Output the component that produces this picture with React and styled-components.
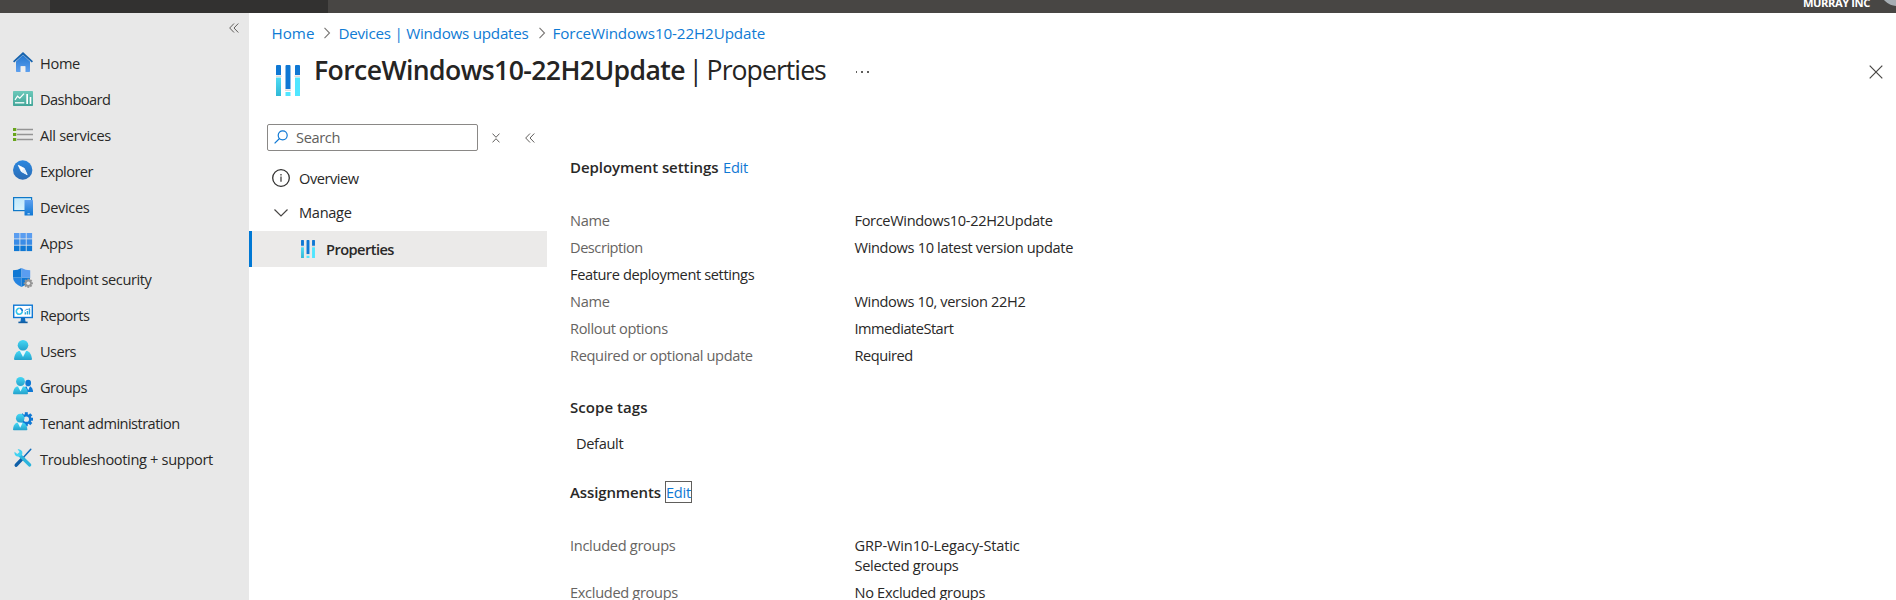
import React from "react";
import styled, { createGlobalStyle } from "styled-components";

const GlobalStyle = createGlobalStyle`
  * { box-sizing: border-box; }
  body {
    margin: 0;
    background: #fff;
    overflow: hidden;
    color: #292827;
    font-family: "Open Sans", "Noto Sans", sans-serif;
    font-size: 14.6px;
  }
  svg { display: block; flex: none; }
`;

const Page = styled.div`
  display: flex;
  flex-direction: column;
  height: 600px;
  overflow: hidden;
`;

const TopBar = styled.header`
  display: flex;
  flex: none;
  align-items: flex-end;
  height: 13px;
  padding-left: 50px;
  background: #484644;
  overflow: hidden;
`;

const TopSearch = styled.div`
  width: 278px;
  height: 13px;
  background: #323130;
`;

const TenantName = styled.div`
  margin: 0 10px 3px auto;
  color: #fff;
  font-size: 11.2px;
  font-weight: 700;
  line-height: 14px;
  letter-spacing: -0.42px;
  white-space: nowrap;
`;

const Avatar = styled.div`
  flex: none;
  width: 34px;
  height: 34px;
  margin: 0 -18px 7px 0;
  border-radius: 50%;
  background: #a7aeb4;
`;

const Columns = styled.div`
  display: flex;
  flex: 1;
  min-height: 0;
`;

const Sidebar = styled.nav`
  flex: none;
  width: 249px;
  background: #e8e8e8;
`;

const SidebarHeader = styled.div`
  display: flex;
  justify-content: flex-end;
  height: 33px;
  padding: 10px 10px 0 0;
`;

const SideItem = styled.a`
  display: flex;
  align-items: center;
  gap: 7px;
  height: 36px;
  padding: 0 0 2px 13px;
  svg { margin-bottom: 2px; }
`;

const Text = styled.span`
  letter-spacing: ${(p) => p.$track || 0}px;
  white-space: nowrap;
`;

const Content = styled.main`
  flex: 1;
  min-width: 0;
`;

const Breadcrumb = styled.div`
  display: flex;
  align-items: center;
  height: 30px;
  padding: 10px 0 0 22.5px;
  color: #0f7bd4;
  font-size: 15.2px;
  svg { margin: 0 7px 0 9px; }
`;

const TitleRow = styled.div`
  display: flex;
  align-items: flex-start;
  height: 53px;
  padding: 7px 13px 0 27px;
`;

const TitleIcon = styled.div`
  margin-top: 15px;
`;

const CloseButton = styled.div`
  margin: 15px 0 0 auto;
`;

const Title = styled.h1`
  display: flex;
  gap: 3.5px;
  margin: 0 0 0 14px;
  font-size: 26.6px;
  font-weight: 400;
  line-height: 40px;
  color: #252423;
`;

const TitleName = styled(Text)`
  font-weight: 600;
`;

const TitleSection = styled(Text)`
  word-spacing: -1.5px;
`;

const More = styled.div`
  display: flex;
  gap: 4px;
  margin: 21px 0 0 30px;
`;

const Dot = styled.i`
  width: 1.6px;
  height: 1.6px;
  background: #605e5c;
`;

const Body = styled.div`
  display: flex;
`;

const Menu = styled.aside`
  flex: none;
  width: 298px;
  padding-top: 28px;
`;

const MenuTools = styled.div`
  display: flex;
  align-items: center;
  height: 27px;
  margin-bottom: 9px;
  padding-left: 18px;
`;

const SearchBox = styled.div`
  display: flex;
  align-items: center;
  gap: 8px;
  width: 211px;
  height: 27px;
  margin-right: 14px;
  padding: 0 0 1px 6px;
  border: 1px solid #8a8886;
  border-radius: 2px;
  color: #605e5c;
`;

const CollapseMenu = styled.div`
  margin: 1px 0 0 25px;
`;

const MenuItem = styled.div`
  display: flex;
  align-items: center;
  gap: 9px;
  height: 36px;
  padding: 0 0 1px 23px;
`;

const MenuGroup = styled(MenuItem)`
  height: 35px;
  padding-bottom: 3px;
  svg { margin-top: 2px; }
`;

const SelectedItem = styled(MenuItem)`
  gap: 11px;
  padding: 0 0 0 49px;
  border-left: 3px solid #0078d4;
  background: #ebeae9;
  font-weight: 600;
`;

const Details = styled.section`
  flex: 1;
  padding: 61px 0 0 23px;
  line-height: 20px;
`;

const Heading = styled.h2`
  display: flex;
  align-items: center;
  gap: ${(p) => p.$gap || 5}px;
  height: 20px;
  margin: ${(p) => p.$top || 0}px 0 0;
  font-size: 15px;
  font-weight: 600;
`;

const EditLink = styled.a`
  color: #0f78d4;
  font-size: 14.6px;
  font-weight: 400;
  line-height: 20px;
  letter-spacing: -0.2px;
  ${(p) => p.$focused && "outline: 1px solid #605e5c;"}
`;

const Fields = styled.div`
  display: grid;
  grid-template-columns: 284.5px 1fr;
  margin-top: 29.5px;
`;

const Label = styled.div`
  padding: 3.5px 0;
  color: #666462;
`;

const Value = styled.div`
  display: flex;
  flex-direction: column;
  padding: 3.5px 0;
`;

const Subheading = styled.div`
  grid-column: 1 / -1;
  padding: 3.5px 0;
`;

const ScopeTag = styled.div`
  margin: 16px 0 0 6px;
`;

function Svg({ w = 20, h = 20, box, children }) {
  return (
    <svg width={w} height={h} viewBox={box || `0 0 ${w} ${h}`} fill="none">
      {children}
    </svg>
  );
}

const GradientDefs = styled.svg`
  position: absolute;
`;

function Gradients() {
  const defs = [
    ["gBlue", "#2277d0", "#5ea0ef"],
    ["gBlueDown", "#5ea0ef", "#0f78d4"],
    ["gCyan", "#45d8f5", "#24a1cb"],
    ["gTeal", "#6cc9ba", "#42a598"],
    ["gExplorer", "#2b88e0", "#2b6cb5"],
    ["gScreen", "#bfe7fb", "#d8f2fd"],
    ["gBar", "#50dcf5", "#2fb8d6"],
  ];
  return (
    <GradientDefs width="0" height="0">
      <defs>
        {defs.map(([id, a, b]) => (
          <linearGradient key={id} id={id} x1="0" x2="0" y1="0" y2="1">
            <stop offset="0" stopColor={a} />
            <stop offset="1" stopColor={b} />
          </linearGradient>
        ))}
      </defs>
    </GradientDefs>
  );
}

const DoubleChevron = () => (
  <Svg w={10} h={10}>
    <path d="M5 .5.7 5 5 9.500M9.300.5 5 5l4.300 4.500" stroke="#605e5c" strokeWidth="1" />
  </Svg>
);

const Crumb = () => (
  <Svg w={8} h={12}>
    <path d="M1.500.8 6.500 6l-5 5.200" stroke="#797775" strokeWidth="1.100" />
  </Svg>
);

const HomeIcon = () => (
  <Svg>
    <path d="M3 9.500 10 3l7 6.500V19.200q0 .8-.8.8H12.300v-5.700H7.700V20H3.800q-.8 0-.8-.8z" fill="url(#gBlue)" />
    <path d="M7.700 20v-5.700h4.600V20z" fill="#efefef" />
    <path d="M10 0 20 9.300l-1.200 1.300L10 2.800l-8.800 7.800L0 9.300z" fill="#1562ad" />
  </Svg>
);

const DashboardIcon = () => (
  <Svg h={15}>
    <rect width="20" height="15" rx=".7" fill="url(#gTeal)" />
    <path d="M2 8.800 4.500 5.200l2.300 2 4.200-4.500" stroke="#fff" strokeWidth="1.200" />
    <path d="M2 11.800h9.300" stroke="#fff" strokeWidth="1.300" />
    <path d="M13.300 3h1.700v10h-1.700zM16.700 6h1.600v7h-1.600z" fill="#fff" />
  </Svg>
);

const ServicesIcon = () => (
  <Svg h={15}>
    <path d="M4 2.500h16M4 7.500h16M4 12.500h16" stroke="#949494" strokeWidth="1.400" />
    <path d="M0 1h3.300v3H0zM0 6h3.300v3H0zM0 11h3.300v3H0z" fill="#68a51c" />
  </Svg>
);

const ExplorerIcon = () => (
  <Svg>
    <circle cx="9.700" cy="10" r="9.700" fill="url(#gExplorer)" />
    <path d="M5.300 5.300 11.200 8.300 14.200 14.700 8.300 11.500z" fill="#fff" stroke="#fff" strokeWidth=".8" strokeLinejoin="round" />
    <path d="M8.300 11.500 14.200 14.700 11.200 8.300z" fill="#e3effb" />
  </Svg>
);

const DevicesIcon = () => (
  <Svg>
    <rect x=".6" y="1.600" width="18" height="13" fill="url(#gScreen)" stroke="#0f78c8" strokeWidth="1.200" />
    <rect x="11.500" y="4" width="8.500" height="15.500" rx=".6" fill="url(#gBlueDown)" />
    <path d="M14.500 17.800h2.300" stroke="#cfe5fb" />
  </Svg>
);

const AppsIcon = () => (
  <Svg>
    {["#5a9df0", "#3a8ce6", "#0f78d4"].map((color, row) =>
      [0, 1, 2].map((col) => (
        <rect key={`${row}${col}`} x={1 + col * 6.3} y={1 + row * 6.3} width="5.500" height="5.500" fill={color} />
      ))
    )}
  </Svg>
);

const Cog = ({ x, y, r, hole, color }) => (
  <g transform={`translate(${x} ${y})`}>
    {[0, 45, 90, 135].map((a) => (
      <path key={a} d={`M0 ${-r}V${r}`} stroke={color} strokeWidth={r * 0.42} transform={`rotate(${a})`} />
    ))}
    <circle r={r * 0.74} fill={color} />
    <circle r={r * 0.38} fill={hole} />
  </g>
);

const SecurityIcon = () => (
  <Svg>
    <path d="M8.500 0Q4.800 2.200 0 2.200V9.500h8.500z" fill="#0f78d4" />
    <path d="M0 9.400h8.500V19Q0 14.700 0 9.400z" fill="#2584e0" />
    <path d="M8.500 9.400h8.700Q17 14.700 8.500 19z" fill="#0f78d4" />
    <path d="M8.500 0q4 2.200 8.700 2.200V9.500H8.500z" fill="#5a9df0" />
    <Cog x={15.3} y={15.3} r={4.6} hole="#e8e8e8" color="#949494" />
  </Svg>
);

const ReportsIcon = () => (
  <Svg>
    <rect x=".7" y="1.200" width="18.600" height="12.300" fill="#fff" stroke="#0f78d4" strokeWidth="1.400" />
    <path d="M8 14h4l.6 4H7.400z" fill="#0f6cbd" />
    <path d="M5.400 17.600h9.200v1.600H5.400z" fill="#115ea3" />
    <path d="M6.500 4.300a3 3 0 1 0 2.800 3" stroke="#32c5e9" strokeWidth="1.600" />
    <path d="M6.700 4.300a3 3 0 0 1 2.600 3" stroke="#0f78d4" strokeWidth="1.600" />
    <path d="M12.300 10.500V8.300M14.400 10.500V7M16.500 10.500V4.800" stroke="#2aa7d8" strokeWidth="1.400" />
    <path d="m11.500 7 2.500-2 1 .7 2-2" stroke="#0f78d4" strokeWidth=".7" />
  </Svg>
);

const Person = ({ fill, collar = "#e8f8fd" }) => (
  <g>
    <path d="M1 19q.6-6 4.500-8h9q3.900 2 4.500 8 0 1-1 1H2q-1 0-1-1z" fill={fill} />
    <path d="M6.800 10.700 10 17l3.200-6.300z" fill={collar} />
    <circle cx="10" cy="5.300" r="5.300" fill={fill} />
  </g>
);

const UsersIcon = () => (
  <Svg>
    <Person fill="url(#gCyan)" />
  </Svg>
);

const GroupsIcon = () => (
  <Svg>
    <g transform="translate(9.800 3.800) scale(.54 .61)">
      <Person fill="#0f78d4" />
    </g>
    <g transform="translate(-.8 1) scale(.83 .86)">
      <Person fill="url(#gCyan)" />
    </g>
  </Svg>
);

const TenantIcon = () => (
  <Svg>
    <Cog x={13.3} y={7.2} r={7} hole="#e8e8e8" color="#0f78d4" />
    <g transform="translate(-.8 1.800) scale(.8 .82)">
      <Person fill="url(#gCyan)" />
    </g>
  </Svg>
);

const SupportIcon = () => (
  <Svg>
    <path d="M17.800 1.200 9 11" stroke="#0f6cbd" strokeWidth="1.500" strokeLinecap="round" />
    <path d="M9.800 10.200 3.200 17.200" stroke="#0f5fa8" strokeWidth="3.400" strokeLinecap="round" />
    <path d="M6.500 7 16.700 17" stroke="#2bb4dc" strokeWidth="3.200" strokeLinecap="round" />
    <path d="M4.600 1.300q3.600-.6 4.700 2.400.5 2.400-1 4Q6 9.200 3.500 8.200 1.100 7 1.500 3.800L4.300 6 6.600 3.900z" fill="#41d2f1" />
  </Svg>
);

const SettingsBars = ({ w, h }) => (
  <Svg w={w} h={h} box="0 0 24 31">
    <path d="M0 1q0-1 1-1h3q1 0 1 1v9H0zM9.500 1q0-1 1-1h3q1 0 1 1v23h-5zM19 1q0-1 1-1h3q1 0 1 1v9h-5z" fill="#0f78d4" />
    <path d="M0 12.500h5V31H0z" fill="url(#gBar)" />
    <path d="M9.500 27h5v4h-5zM19 12.500h5V31h-5z" fill="#50e6ff" />
    <path d="M-.5 10.500h6v1.500h-6zM9 24.500h6V26H9zM18.500 10.500h6v1.500h-6z" fill="#dcdcdc" />
  </Svg>
);

const SearchIcon = () => (
  <Svg w={14} h={14}>
    <circle cx="8.700" cy="5.300" r="4.500" stroke="#0f78d4" strokeWidth="1.200" />
    <path d="M5.500 8.500.6 13.400" stroke="#0f78d4" strokeWidth="1.200" />
  </Svg>
);

const CollapseAll = () => (
  <Svg w={8} h={10}>
    <path d="M.5.6 4 4.300 7.500.6M.5 9.400 4 5.700l3.500 3.700" stroke="#605e5c" strokeWidth="1" />
  </Svg>
);

const InfoIcon = () => (
  <Svg w={18} h={18}>
    <circle cx="9" cy="9" r="8.300" stroke="#323130" strokeWidth="1.300" />
    <path d="M9 7.500v5.200M9 5v1.400" stroke="#323130" strokeWidth="1.200" />
  </Svg>
);

const ChevronDown = () => (
  <Svg w={18} h={10}>
    <path d="m2.500 1.500 6.500 6.500 6.500-6.500" stroke="#484644" strokeWidth="1.200" />
  </Svg>
);

const CloseIcon = () => (
  <Svg w={14} h={14}>
    <path d="m.7.7 12.600 12.600M13.300.7.7 13.300" stroke="#484644" strokeWidth="1.200" />
  </Svg>
);

const NAV = [
  ["Home", -0.31, HomeIcon],
  ["Dashboard", -0.55, DashboardIcon],
  ["All services", -0.3, ServicesIcon],
  ["Explorer", -0.55, ExplorerIcon],
  ["Devices", -0.35, DevicesIcon],
  ["Apps", -0.3, AppsIcon],
  ["Endpoint security", -0.42, SecurityIcon],
  ["Reports", -0.53, ReportsIcon],
  ["Users", -0.55, UsersIcon],
  ["Groups", -0.55, GroupsIcon],
  ["Tenant administration", -0.54, TenantIcon],
  ["Troubleshooting + support", -0.34, SupportIcon],
];

function Field({ label, track, values }) {
  return (
    <>
      <Label>
        <Text $track={track}>{label}</Text>
      </Label>
      <Value>
        {values.map(([text, t]) => (
          <Text key={text} $track={t}>{text}</Text>
        ))}
      </Value>
    </>
  );
}

export default function App() {
  return (
    <Page>
      <GlobalStyle />
      <Gradients />
      <TopBar>
        <TopSearch />
        <TenantName>MURRAY INC</TenantName>
        <Avatar />
      </TopBar>
      <Columns>
        <Sidebar>
          <SidebarHeader>
            <DoubleChevron />
          </SidebarHeader>
          {NAV.map(([label, track, Icon]) => (
            <SideItem key={label}>
              <Icon />
              <Text $track={track}>{label}</Text>
            </SideItem>
          ))}
        </Sidebar>
        <Content>
          <Breadcrumb>
            <Text>Home</Text>
            <Crumb />
            <Text $track={-0.25}>Devices | Windows updates</Text>
            <Crumb />
            <Text $track={-0.1}>ForceWindows10-22H2Update</Text>
          </Breadcrumb>
          <TitleRow>
            <TitleIcon>
              <SettingsBars w={24} h={31} />
            </TitleIcon>
            <Title>
              <TitleName $track={-0.6}>ForceWindows10-22H2Update</TitleName>
              <TitleSection $track={-0.95}>| Properties</TitleSection>
            </Title>
            <More>
              <Dot />
              <Dot />
              <Dot />
            </More>
            <CloseButton>
              <CloseIcon />
            </CloseButton>
          </TitleRow>
          <Body>
            <Menu>
              <MenuTools>
                <SearchBox>
                  <SearchIcon />
                  <Text $track={-0.37}>Search</Text>
                </SearchBox>
                <CollapseAll />
                <CollapseMenu>
                  <DoubleChevron />
                </CollapseMenu>
              </MenuTools>
              <MenuItem>
                <InfoIcon />
                <Text $track={-0.45}>Overview</Text>
              </MenuItem>
              <MenuGroup>
                <ChevronDown />
                <Text $track={-0.3}>Manage</Text>
              </MenuGroup>
              <SelectedItem>
                <SettingsBars w={14} h={18} />
                <Text $track={-0.54}>Properties</Text>
              </SelectedItem>
            </Menu>
            <Details>
              <Heading $gap={4.5}>
                <Text $track={-0.07}>Deployment settings</Text>
                <EditLink>Edit</EditLink>
              </Heading>
              <Fields>
                <Field label="Name" track={-0.3} values={[["ForceWindows10-22H2Update", -0.35]]} />
                <Field label="Description" track={-0.46} values={[["Windows 10 latest version update", -0.34]]} />
                <Subheading>
                  <Text $track={-0.38}>Feature deployment settings</Text>
                </Subheading>
                <Field label="Name" track={-0.3} values={[["Windows 10, version 22H2", -0.36]]} />
                <Field label="Rollout options" track={-0.36} values={[["ImmediateStart", -0.5]]} />
                <Field label="Required or optional update" track={-0.36} values={[["Required", -0.46]]} />
              </Fields>
              <Heading $top={28.5}>
                <Text $track={0.05}>Scope tags</Text>
              </Heading>
              <ScopeTag>
                <Text $track={-0.33}>Default</Text>
              </ScopeTag>
              <Heading $top={29} $gap={5}>
                <Text $track={-0.12}>Assignments</Text>
                <EditLink $focused>Edit</EditLink>
              </Heading>
              <Fields>
                <Field
                  label="Included groups"
                  track={-0.3}
                  values={[["GRP-Win10-Legacy-Static", -0.15], ["Selected groups", -0.32]]}
                />
                <Field label="Excluded groups" track={-0.32} values={[["No Excluded groups", -0.32]]} />
              </Fields>
            </Details>
          </Body>
        </Content>
      </Columns>
    </Page>
  );
}
